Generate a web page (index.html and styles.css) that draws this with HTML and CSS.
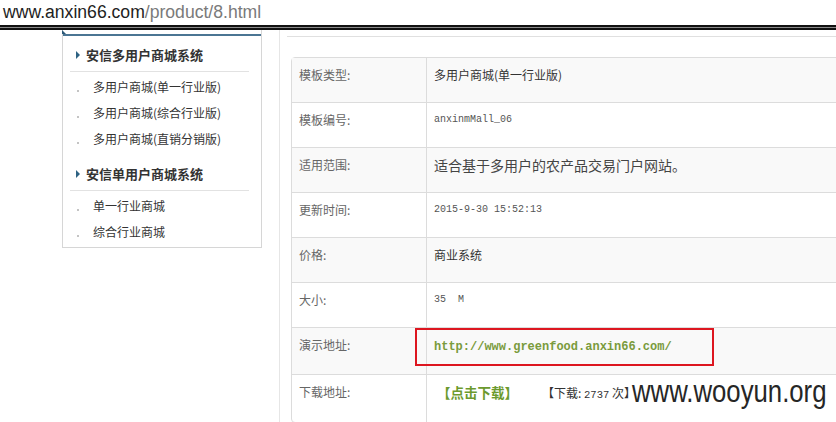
FILE: index.html
```html
<!DOCTYPE html>
<html lang="zh-CN">
<head>
<meta charset="utf-8">
<title>安信多用户商城系统</title>
<link rel="stylesheet" href="styles.css">
</head>
<body>
<div class="addr"><span class="host">www.anxin66.com</span><span class="path">/product/8.html</span></div>
<div class="rule"></div>
<div class="main">
  <div class="sidebar">
    <div class="sb-top"><span class="corner"></span></div>
    <div class="sb-head"><span class="arrow"></span>安信多用户商城系统</div>
    <ul class="sb-list">
      <li><span class="dot"></span>多用户商城(单一行业版)</li>
      <li><span class="dot"></span>多用户商城(综合行业版)</li>
      <li><span class="dot"></span>多用户商城(直销分销版)</li>
    </ul>
    <div class="sb-head sb-head2"><span class="arrow"></span>安信单用户商城系统</div>
    <ul class="sb-list last">
      <li><span class="dot"></span>单一行业商城</li>
      <li><span class="dot"></span>综合行业商城</li>
    </ul>
  </div>
  <div class="vline"></div>
  <div class="content">
    <div class="topline"></div>
    <table class="info">
      <tr><td class="lbl">模板类型:</td><td class="val">多用户商城(单一行业版)</td></tr>
      <tr><td class="lbl">模板编号:</td><td class="val mono">anxinmMall_06</td></tr>
      <tr><td class="lbl">适用范围:</td><td class="val big">适合基于多用户的农产品交易门户网站。</td></tr>
      <tr><td class="lbl">更新时间:</td><td class="val mono">2015-9-30 15:52:13</td></tr>
      <tr><td class="lbl">价格:</td><td class="val">商业系统</td></tr>
      <tr><td class="lbl">大小:</td><td class="val mono">35  M</td></tr>
      <tr><td class="lbl">演示地址:</td><td class="val demo"><span class="url">http://www.greenfood.anxin66.com/</span><span class="redbox"></span></td></tr>
      <tr><td class="lbl">下载地址:</td><td class="val"><span class="dl">【点击下载】</span><span class="count">【下载: <span class="num">2737</span> 次】</span></td></tr>
    </table>
  </div>
</div>
<div class="watermark">www.wooyun.org</div>
</body>
</html>
```
FILE: styles.css
```css
html, body {
  margin: 0;
  padding: 0;
  overflow: hidden;
  background: #fff;
}
body {
  font-family: "Noto Sans CJK SC", "Liberation Sans", sans-serif;
  color: #333;
  width: 836px;
  height: 422px;
}
.addr {
  height: 25px;
  line-height: 25px;
  padding-left: 3px;
  font-family: "Liberation Sans", Arial, sans-serif;
  font-size: 17.6px;
  white-space: nowrap;
}
.addr .host { color: #222; }
.addr .path { color: #7a7a7a; }
.rule {
  height: 1px;
  background: #8a8a8a;
  border-top: 2px solid #111;
  border-bottom: 2px solid #111;
}
.main {
  display: flex;
  padding-left: 62px;
  height: 392px;
}
.sidebar {
  width: 200px;
  box-sizing: border-box;
  border: 1px solid #d6d6d6;
  border-top: 0;
  align-self: flex-start;
  padding-bottom: 2px;
}
.sb-top {
  height: 4px;
  border-bottom: 2px solid #4b7593;
  display: flex;
  align-items: flex-end;
}
.corner {
  width: 0;
  height: 0;
  margin-left: -1px;
  border-bottom: 4px solid #2b5877;
  border-right: 4px solid transparent;
}
.sb-head {
  margin: 0 12px 0 7px;
  padding: 9px 0 6px 6px;
  line-height: 20px;
  font-size: 13px;
  font-weight: bold;
  color: #333;
  border-bottom: 1px solid #e2e2e2;
  display: flex;
  align-items: center;
}
.sb-head2 { margin-top: 3px; }
.arrow {
  width: 0;
  height: 0;
  border-left: 4px solid #2d6283;
  border-top: 4px solid transparent;
  border-bottom: 4px solid transparent;
  margin-right: 6px;
}
.sb-list {
  list-style: none;
  margin: 2px 0 0;
  padding: 0;
}
.sb-list li {
  height: 26px;
  line-height: 26px;
  font-size: 12px;
  color: #333;
  display: flex;
  align-items: center;
}
.dot {
  width: 2px;
  height: 2px;
  background: #c4c4c4;
  margin: 8px 14px 0 14px;
}
.vline {
  width: 1px;
  margin-left: 17px;
  background: #e6e6e6;
}
.content {
  flex: 1;
  padding-left: 7px;
  overflow: hidden;
}
.topline {
  margin-top: 6px;
  border-top: 1px solid #e0e0e0;
}
.info {
  margin: 20px 0 0 4px;
  width: 600px;
  border: 1px solid #dcdcdc;
  border-radius: 4px;
  border-spacing: 0;
}
.info td {
  padding: 7px 7px 17px;
  line-height: 20px;
  font-size: 12px;
  vertical-align: top;
  border-top: 1px solid #dcdcdc;
  white-space: nowrap;
}
.info tr:first-child td { border-top: 0; }
.info tr:nth-child(odd) td { background: #f9f9f9; }
.info td.lbl {
  width: 120px;
  color: #666;
}
.info td.val {
  border-left: 1px solid #dcdcdc;
  color: #333;
}
.info td.mono {
  font-family: "Liberation Mono", monospace;
  font-size: 10px;
  color: #555;
  white-space: pre;
}
.info td.big {
  font-size: 14px;
  color: #444;
}
.info td.demo { position: relative; }
.url {
  font-family: "Liberation Mono", monospace;
  font-weight: bold;
  font-size: 12px;
  color: #7a9b3c;
}
.redbox {
  position: absolute;
  left: -12px;
  top: 0;
  width: 299px;
  height: 38px;
  box-sizing: border-box;
  border: 2px solid #dd1620;
}
.dl {
  font-size: 13.5px;
  font-weight: bold;
  color: #6c9a2e;
  margin-left: 3px;
}
.count {
  margin-left: 30px;
  font-size: 12px;
  color: #333;
}
.num { font-family: "Liberation Mono", monospace; font-size: 10.5px; }
.watermark {
  position: absolute;
  left: 632px;
  top: 376px;
  font-family: "Liberation Sans", Arial, sans-serif;
  font-size: 31px;
  line-height: 31px;
  color: #262626;
  transform: scaleX(0.83);
  transform-origin: left top;
  white-space: nowrap;
}
```
